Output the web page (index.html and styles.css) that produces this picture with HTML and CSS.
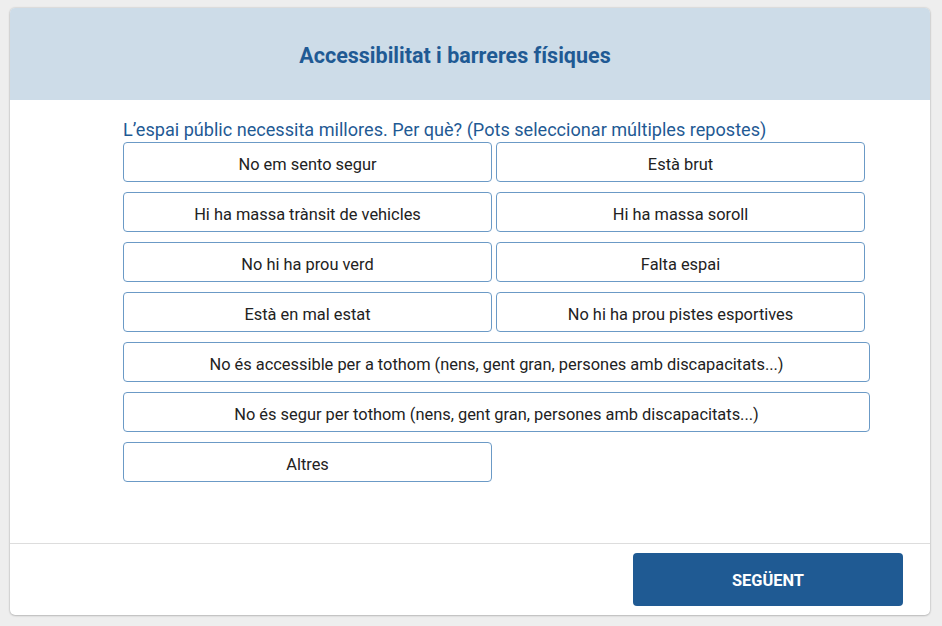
FILE: index.html
```html
<!DOCTYPE html>
<html lang="ca">
<head>
<meta charset="utf-8">
<title>Accessibilitat i barreres físiques</title>
<link rel="stylesheet" href="styles.css">
</head>
<body>
<div class="card">
  <header class="card-header">
    <h1 class="title">Accessibilitat i barreres físiques</h1>
  </header>
  <main class="card-body">
    <div class="question">
      <p class="question-text">L’espai públic necessita millores. Per què? (Pots seleccionar múltiples repostes)</p>
      <div class="options">
        <button class="option half">No em sento segur</button>
        <button class="option half">Està brut</button>
        <button class="option half">Hi ha massa trànsit de vehicles</button>
        <button class="option half">Hi ha massa soroll</button>
        <button class="option half">No hi ha prou verd</button>
        <button class="option half">Falta espai</button>
        <button class="option half">Està en mal estat</button>
        <button class="option half">No hi ha prou pistes esportives</button>
        <button class="option full">No és accessible per a tothom (nens, gent gran, persones amb discapacitats...)</button>
        <button class="option full">No és segur per tothom (nens, gent gran, persones amb discapacitats...)</button>
        <button class="option half">Altres</button>
      </div>
    </div>
  </main>
  <footer class="card-footer">
    <button class="next">SEGÜENT</button>
  </footer>
</div>
</body>
</html>
```
FILE: styles.css
```css
* { box-sizing: border-box; }
html, body { margin: 0; padding: 0; }
body {
  background: #eeeeee;
  font-family: Roboto, "Liberation Sans", sans-serif;
  padding: 8px 12px 11px 10px;
  width: 942px;
  height: 626px;
}
.card {
  width: 920px;
  height: 607px;
  background: #fff;
  border-radius: 5px;
  box-shadow: 0 0 2px rgba(0,0,0,0.25), 0 1px 2px rgba(0,0,0,0.15);
  display: flex;
  flex-direction: column;
  overflow: hidden;
}
.card-header {
  background: #cddce8;
  height: 92px;
  display: flex;
  align-items: center;
  justify-content: center;
  padding-right: 30px;
}
.title {
  margin: 0;
  font-size: 21.5px;
  font-weight: 700;
  color: #1f5a94;
  padding-top: 2px;
}
.card-body {
  flex: 1;
  padding: 19px 0 0 113px;
  border-bottom: 1px solid #dddddd;
}
.question { width: 747px; }
.question-text {
  margin: 0 0 2px 0;
  font-size: 18.1px;
  line-height: 21px;
  color: #1f5a94;
}
.options {
  display: flex;
  flex-wrap: wrap;
  column-gap: 4px;
  row-gap: 10px;
}
.option {
  height: 40px;
  background: #fff;
  border: 1px solid #6b9ac6;
  border-radius: 4px;
  font-family: Roboto, "Liberation Sans", sans-serif;
  font-size: 16.4px;
  color: #222;
  padding: 4px 8px 0;
  cursor: pointer;
}
.option.half { width: 369px; }
.option.full { width: 747px; }
.card-footer {
  height: 71px;
  display: flex;
  align-items: center;
  justify-content: flex-end;
  padding: 0 27px 0 0;
}
.next {
  width: 270px;
  height: 53px;
  background: #1f5a93;
  color: #fff;
  border: none;
  border-radius: 4px;
  font-family: Roboto, "Liberation Sans", sans-serif;
  font-size: 16.4px;
  font-weight: 700;
  padding-top: 2px;
  cursor: pointer;
}
```
